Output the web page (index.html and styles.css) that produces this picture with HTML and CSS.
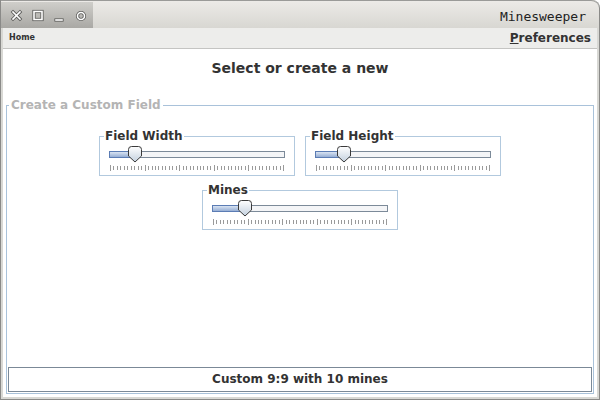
FILE: index.html
```html
<!DOCTYPE html>
<html>
<head>
<meta charset="utf-8">
<link rel="stylesheet" href="styles.css">
</head>
<body>
<svg class="defs" width="0" height="0">
  <defs>
    <linearGradient id="fillg" x1="0" y1="0" x2="0" y2="1">
      <stop offset="0" stop-color="#dfe8f4"/>
      <stop offset="1" stop-color="#8fa9d2"/>
    </linearGradient>
    <linearGradient id="thumbg" x1="0" y1="0" x2="0" y2="1">
      <stop offset="0" stop-color="#ffffff"/>
      <stop offset="1" stop-color="#c3d0de"/>
    </linearGradient>
    <g id="ticks">
      <path stroke="#9a9a9a" stroke-width="1" fill="none" d="M4.5 20v4M8.5 20v4M11.5 20v4M15.5 20v4M18.5 20v4M22.5 20v4M25.5 20v4M29.5 20v4M32.5 20v4M39.5 20v4M43.5 20v4M46.5 20v4M49.5 20v4M53.5 20v4M56.5 20v4M60.5 20v4M63.5 20v4M67.5 20v4M74.5 20v4M77.5 20v4M81.5 20v4M84.5 20v4M88.5 20v4M91.5 20v4M94.5 20v4M98.5 20v4M101.5 20v4M108.5 20v4M112.5 20v4M115.5 20v4M119.5 20v4M122.5 20v4M126.5 20v4M129.5 20v4M132.5 20v4M136.5 20v4M143.5 20v4M146.5 20v4M150.5 20v4M153.5 20v4M157.5 20v4M160.5 20v4M164.5 20v4M167.5 20v4M171.5 20v4"/>
      <path stroke="#9a9a9a" stroke-width="1" fill="none" d="M1.5 19v6M36.5 19v6M70.5 19v6M105.5 19v6M139.5 19v6M174.5 19v6"/>
    </g>
    <path id="thumb" d="M0.5 3.5q0-3 3-3h7q3 0 3 3v6.5l-6.5 6l-6.5-6z" fill="url(#thumbg)" stroke="#3a3a3a" stroke-width="1"/>
  </defs>
</svg>
<div class="window">
  <div class="titlebar">
    <div class="wbuttons">
      <svg width="92" height="26" viewBox="0 0 92 26">
        <g stroke="#5a5a58" stroke-width="3.2" fill="none" stroke-linecap="square">
          <path d="M12 10l7 7M19 10l-7 7"/>
          <rect x="33" y="9.5" width="8" height="8"/>
          <path d="M55 18h6"/>
          <circle cx="80" cy="14" r="3.5"/>
        </g>
        <g stroke="#ffffff" stroke-width="1.6" fill="none" stroke-linecap="square">
          <path d="M12 10l7 7M19 10l-7 7"/>
          <rect x="33" y="9.5" width="8" height="8"/>
          <path d="M55 18h6"/>
          <circle cx="80" cy="14" r="3.5"/>
        </g>
      </svg>
    </div>
    <div class="wtitle">Minesweeper</div>
  </div>
  <div class="menubar">
    <span class="menu-home">Home</span>
    <span class="menu-pref"><u>P</u>references</span>
  </div>
  <div class="content">
    <h1 class="heading">Select or create a new</h1>
    <fieldset class="custom">
      <legend class="custom-title">Create a Custom Field</legend>
      <div class="row">
        <fieldset class="group">
          <legend class="group-title">Field Width</legend>
          <svg class="slider" width="178" height="27">
            <rect x="0.5" y="5.5" width="175" height="6" fill="#f4f5f7" stroke="#7c8a99"/>
            <rect x="0.5" y="5.5" width="22" height="6" fill="url(#fillg)" stroke="#5b7cb4"/>
            <use href="#ticks"/>
            <use href="#thumb" x="19"/>
          </svg>
        </fieldset>
        <fieldset class="group">
          <legend class="group-title">Field Height</legend>
          <svg class="slider" width="178" height="27">
            <rect x="0.5" y="5.5" width="175" height="6" fill="#f4f5f7" stroke="#7c8a99"/>
            <rect x="0.5" y="5.5" width="25" height="6" fill="url(#fillg)" stroke="#5b7cb4"/>
            <use href="#ticks"/>
            <use href="#thumb" x="22"/>
          </svg>
        </fieldset>
      </div>
      <div class="row">
        <fieldset class="group">
          <legend class="group-title">Mines</legend>
          <svg class="slider" width="178" height="27">
            <rect x="0.5" y="5.5" width="175" height="6" fill="#f4f5f7" stroke="#7c8a99"/>
            <rect x="0.5" y="5.5" width="29" height="6" fill="url(#fillg)" stroke="#5b7cb4"/>
            <use href="#ticks"/>
            <use href="#thumb" x="26"/>
          </svg>
        </fieldset>
      </div>
      <div class="result">Custom 9:9 with 10 mines</div>
    </fieldset>
  </div>
</div>
</body>
</html>
```

FILE: styles.css
```css
html, body {
  margin: 0;
  padding: 0;
  background: #ffffff;
}
.defs {
  position: absolute;
  width: 0;
  height: 0;
}
.window {
  width: 600px;
  height: 400px;
  box-sizing: border-box;
  display: flex;
  flex-direction: column;
  background: #d8d8d4;
  border-left: 1px solid #8a8a88;
  border-right: 1px solid #8a8a88;
  border-bottom: 1px solid #8a8a88;
  border-radius: 0 8px 0 0;
  padding: 0 2px 2px 2px;
  font-family: "DejaVu Sans", sans-serif;
  color: #333333;
}
.titlebar {
  height: 28px;
  margin: 0 -2px;
  flex: none;
  display: flex;
  align-items: stretch;
  justify-content: space-between;
  background: linear-gradient(#eceae7, #d8d7d2);
  border-top: 1px solid #9a9a98;
  border-radius: 0 8px 0 0;
  box-sizing: border-box;
  padding-top: 1px;
}
.wbuttons {
  width: 92px;
  background: linear-gradient(#cfceca, #a9a8a4);
}
.wbuttons svg {
  display: block;
}
.wtitle {
  font-family: "DejaVu Sans Mono", monospace;
  font-size: 13px;
  color: #222;
  padding: 7px 13px 0 0;
}
.menubar {
  height: 21px;
  flex: none;
  box-sizing: border-box;
  background: #ededeb;
  border-bottom: 1px solid #c4c4c2;
  display: flex;
  justify-content: space-between;
  align-items: flex-start;
  padding: 0 6px 0 6px;
}
.menu-home {
  font-size: 8px;
  font-weight: bold;
  padding-top: 5px;
}
.menu-pref {
  font-size: 12px;
  font-weight: bold;
  padding-top: 3px;
}
.content {
  flex: 1;
  background: #ffffff;
  display: flex;
  flex-direction: column;
  padding: 0 3px 3px 3px;
  min-height: 0;
}
.heading {
  font-size: 14px;
  font-weight: bold;
  line-height: 17px;
  margin: 11px 0 0 0;
  text-align: center;
}
.custom {
  flex: 1;
  margin: 21px 0 0 0;
  border: 1px solid #a9c2da;
  padding: 0 1px 1px 1px;
  display: flex;
  flex-direction: column;
  min-width: 0;
  min-height: 0;
}
.custom-title {
  font-size: 12px;
  font-weight: bold;
  color: #b4b4b4;
  padding: 0 2px;
  margin-left: 1px;
  line-height: 14px;
}
.row {
  display: flex;
  justify-content: center;
  gap: 10px;
}
.row:first-of-type {
  margin-top: 17px;
}
.row + .row {
  margin-top: 7px;
}
.group {
  width: 196px;
  box-sizing: border-box;
  margin: 0;
  border: 1px solid #b2c9de;
  padding: 3px 0 2px 9px;
  min-width: 0;
}
.group-title {
  font-size: 12px;
  font-weight: bold;
  color: #333;
  line-height: 14px;
  padding: 0 1px;
  margin-left: -5px;
}
.slider {
  display: block;
}
.result {
  margin-top: auto;
  height: 25px;
  box-sizing: border-box;
  border: 1px solid #7b8997;
  font-size: 12px;
  font-weight: bold;
  text-align: center;
  line-height: 23px;
}
```
